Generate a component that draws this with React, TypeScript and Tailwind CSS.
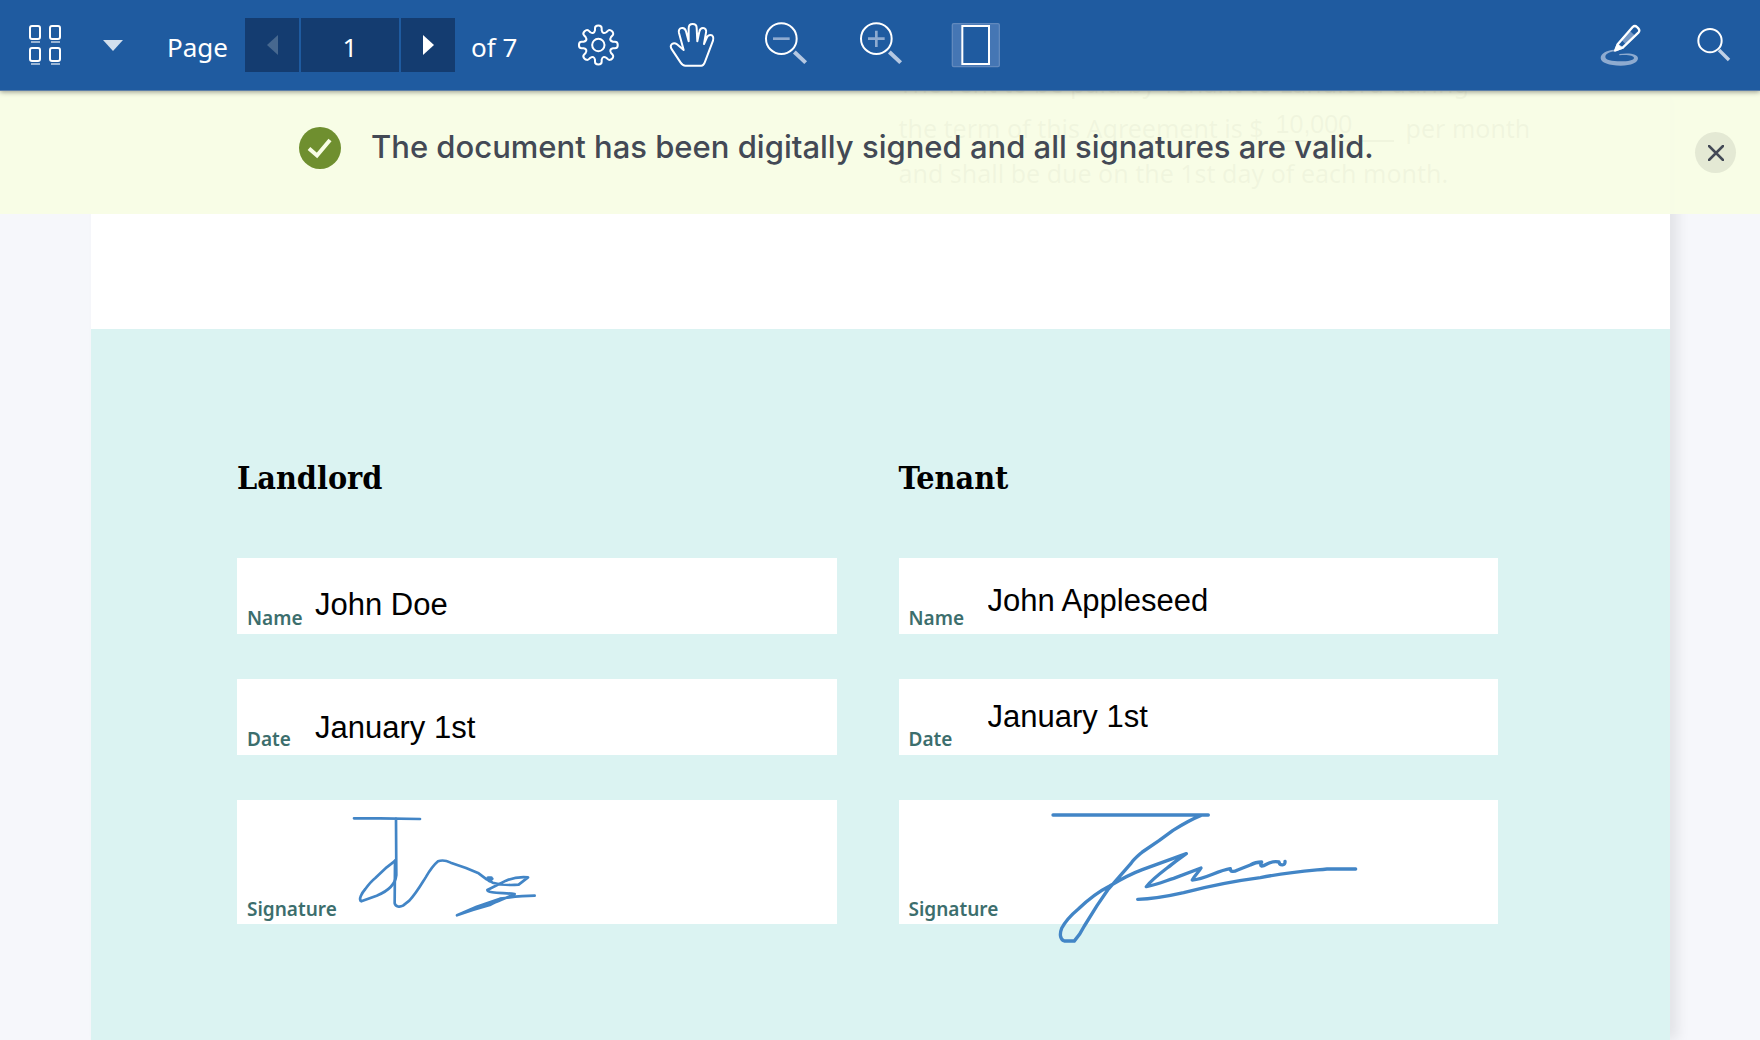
import { useState, type ReactNode } from "react";

const GEAR_PATH = (() => {
  const cx = 175;
  const cy = 135;
  const point = (tooth: number, side: number, radius: number) => {
    const angle = (tooth * Math.PI) / 4;
    const x = cx + radius * Math.sin(angle) + side * Math.cos(angle);
    const y = cy - radius * Math.cos(angle) + side * Math.sin(angle);
    return `${x.toFixed(1)} ${y.toFixed(1)}`;
  };
  const parts: string[] = [];
  for (let i = 0; i < 8; i++) {
    parts.push(`${i === 0 ? "M" : "L"}${point(i, -10, 44)}`);
    parts.push(`L${point(i, -10, 50)}`);
    parts.push(`C${point(i, -10, 61)} ${point(i, 10, 61)} ${point(i, 10, 50)}`);
    parts.push(`L${point(i, 10, 44)}`);
    parts.push(`Q${point(i + 0.5, 0, 34)} ${point(i + 1, -10, 44)}`);
  }
  return parts.join(" ") + "Z";
})();

function ToolIcon({ viewBox, children }: { viewBox: string; children: ReactNode }) {
  return (
    <svg viewBox={viewBox} className="h-12 w-[49px] overflow-visible" fill="none" stroke="#fff" strokeWidth="6" strokeLinecap="round" strokeLinejoin="round" aria-hidden="true">
      {children}
    </svg>
  );
}

function ToolButton({ label, children }: { label: string; children: ReactNode }) {
  return (
    <button type="button" aria-label={label} className="flex h-full w-[95px] items-center justify-center">
      {children}
    </button>
  );
}

function Toolbar() {
  const [page, setPage] = useState("1");
  return (
    <header className="relative z-20 flex h-[91px] shrink-0 items-center border-b border-[#5c7ea8] bg-[#1f5ba0] font-['Noto_Sans',sans-serif] text-[26px] text-white shadow-[0_1px_5px_rgba(0,0,0,0.4)]">
      <button type="button" aria-label="Thumbnails" className="ml-7">
        <svg viewBox="0 0 36 44" className="h-11 w-9" fill="none" stroke="#fff" strokeWidth="2" aria-hidden="true">
          <rect x="2" y="3" width="10" height="13" rx="2" />
          <rect x="22" y="3" width="10" height="13" rx="2" />
          <rect x="2" y="25" width="10" height="13" rx="2" />
          <rect x="22" y="25" width="10" height="13" rx="2" />
          <path d="M3 19h9M23 19h9M3 41h9M23 41h9" strokeOpacity=".55" />
        </svg>
      </button>
      <button type="button" aria-label="View options" className="ml-[39px]">
        <svg viewBox="0 0 20 11" className="h-[11px] w-5" fill="#d2dfed" aria-hidden="true">
          <path d="M0 0h20L10 11z" />
        </svg>
      </button>
      <label htmlFor="page-number" className="ml-11 w-[78px] pt-1">
        Page
      </label>
      <div className="flex h-[54px] gap-[2px]">
        <button type="button" aria-label="Previous page" disabled className="flex w-[54px] items-center justify-center bg-[#143c70]">
          <svg viewBox="0 0 11 20" className="h-5 w-[11px]" fill="#47688f" aria-hidden="true">
            <path d="M11 0v20L0 10z" />
          </svg>
        </button>
        <input id="page-number" value={page} onChange={(e) => setPage(e.target.value)} className="w-[98px] bg-[#143c70] pt-1 text-center text-white outline-none" />
        <button type="button" aria-label="Next page" className="flex w-[54px] items-center justify-center bg-[#143c70]">
          <svg viewBox="0 0 11 20" className="h-5 w-[11px]" fill="#fff" aria-hidden="true">
            <path d="M0 0v20l11-10z" />
          </svg>
        </button>
      </div>
      <span className="ml-4 w-[79px] pt-1 whitespace-nowrap">of 7</span>
      <ToolButton label="Settings">
        <ToolIcon viewBox="99 63 147 144">
          <path d={GEAR_PATH} />
          <circle cx="175" cy="135" r="18.500" />
        </ToolIcon>
      </ToolButton>
      <ToolButton label="Pan">
        <ToolIcon viewBox="384 63 147 144">
          <path d="M436 197H484C489 197 492 193 494 188L519 122C522 112 518 105 512 105C506 105 502 108 500 114L492 132L498 98C500 90 496 84 489 84C482 84 479 89 478 95L472 124L470 84C470 77 465 72 458 72C450 72 446 77 446 85V124L438 94C436 86 431 83 425 84C418 85 415 91 417 99L431 150L411 133C406 129 400 129 396 132C391 136 392 143 396 149L422 188C426 194 430 197 436 197Z" />
        </ToolIcon>
      </ToolButton>
      <ToolButton label="Zoom out">
        <ToolIcon viewBox="669 63 147 144">
          <circle cx="724" cy="116" r="46" />
          <path d="M699 116h50" stroke="#8eabd0" strokeLinecap="butt" strokeWidth="8" />
          <path d="M763 156l34 32" stroke="#b5c8e2" strokeLinecap="butt" strokeWidth="12" />
        </ToolIcon>
      </ToolButton>
      <ToolButton label="Zoom in">
        <ToolIcon viewBox="954 63 147 144">
          <circle cx="1009" cy="116" r="46" />
          <path d="M984 116h50M1009 92v49" stroke="#8eabd0" strokeLinecap="butt" strokeWidth="8" />
          <path d="M1048 156l34 32" stroke="#b5c8e2" strokeLinecap="butt" strokeWidth="12" />
        </ToolIcon>
      </ToolButton>
      <ToolButton label="Fit page">
        <ToolIcon viewBox="1239 63 147 144">
          <rect x="1237" y="71" width="141" height="129" rx="4" fill="#4576b4" stroke="#6189bd" strokeWidth="4" />
          <rect x="1267" y="78" width="80" height="114" fill="#1f5ba0" strokeLinejoin="miter" />
        </ToolIcon>
      </ToolButton>
      <div className="ml-auto flex h-full">
        <button type="button" aria-label="Annotate" className="flex w-[94px] items-center justify-center">
          <ToolIcon viewBox="105 63 147 144">
            <path
              d="M163 149C138 151 122 161 122 174C122 188 148 197 182 197C214 197 234 188 234 175C234 163 210 157 178 162L178 166C202 163 222 167 222 174C222 181 204 184 182 184C156 184 136 180 136 171C136 162 148 156 164 154Z"
              fill="#8eabd0"
              stroke="none"
            />
            <path d="M182 118L200 136L226 108L209 92Z" fill="#7296c4" stroke="none" />
            <path d="M173 133L218 81C222 77 227 77 231 81L235 85C239 89 239 94 235 98L189 142L166 151Z" strokeWidth="7" />
            <path d="M163 153l9-22 17 13z" fill="#fff" strokeWidth="2" />
          </ToolIcon>
        </button>
        <button type="button" aria-label="Search" className="flex w-[94px] items-center justify-center">
          <ToolIcon viewBox="387 63 147 144">
            <circle cx="450" cy="122" r="35" strokeWidth="6" />
            <path d="M477 150l30 30" stroke="#c0d0e6" strokeLinecap="butt" strokeWidth="10" />
          </ToolIcon>
        </button>
      </div>
    </header>
  );
}

function Banner({ onClose }: { onClose: () => void }) {
  return (
    <div role="status" className="absolute inset-x-0 top-0 z-10 flex h-[123px] items-center bg-[#f8fde5]/96 pr-6 pl-[299px] font-['Inter',sans-serif] text-[#434955]">
      <svg viewBox="0 0 42 42" className="mb-[10px] size-[42px] shrink-0" aria-hidden="true">
        <circle cx="21" cy="21" r="21" fill="#6f8f2f" />
        <path d="M10 21.500l8 7L31 13" fill="none" stroke="#f8fde5" strokeWidth="4" />
      </svg>
      <p className="mb-3 ml-[30px] text-[31px] leading-10 font-medium whitespace-nowrap">The document has been digitally signed and all signatures are valid.</p>
      <button type="button" aria-label="Close" onClick={onClose} className="ml-auto flex size-[41px] items-center justify-center rounded-full bg-[#e4e9d4]">
        <svg viewBox="0 0 16 16" className="size-4" stroke="#434955" strokeWidth="2.500" strokeLinecap="round" aria-hidden="true">
          <path d="M1 1l14 14M15 1L1 15" />
        </svg>
      </button>
    </div>
  );
}

type Entry = { id: string; label: string; value: string; inputClass: string };
type Party = { title: string; labelClass: string; entries: Entry[]; signatureBox: string; signature: ReactNode };

const PARTIES: Party[] = [
  {
    title: "Landlord",
    labelClass: "w-[68px]",
    entries: [
      { id: "landlord-name", label: "Name", value: "John Doe", inputClass: "mt-[29px]" },
      { id: "landlord-date", label: "Date", value: "January 1st", inputClass: "mt-[31px]" },
    ],
    signatureBox: "51 30 1800 372",
    signature: (
      <>
        <path d="M402 85H480L600 87M528 86L529 255C526 285 500 305 470 317L424 334C414 330 426 308 436 297C447 282 456 272 466 264L500 232L526 212" />
        <path d="M525 212L524 340C526 351 540 352 549 347L568 332C590 308 602 286 617 262C630 240 642 224 654 214C664 210 680 212 692 218L738 234L776 250L800 268L818 278C845 286 870 286 896 284L924 262C900 260 876 264 858 272L802 300C802 310 850 308 884 312C860 324 830 334 812 344L758 360L711 376L770 350L840 326C880 320 910 317 944 317" />
        <path d="M804 264l10 0M808 272l8 -6" strokeWidth="10" />
      </>
    ),
  },
  {
    title: "Tenant",
    labelClass: "w-[79px]",
    entries: [
      { id: "tenant-name", label: "Name", value: "John Appleseed", inputClass: "mt-[25px]" },
      { id: "tenant-date", label: "Date", value: "January 1st", inputClass: "mt-5" },
    ],
    signatureBox: "26 30 1800 372",
    signature: (
      <g strokeWidth="10">
        <path d="M488 75H954M932 76C905 87 880 101 848 121L806 152L756 186C740 200 730 208 722 220L680 268L652 300L620 347L582 408C573 426 564 440 552 453H522C508 448 508 430 514 415C526 392 546 372 564 357C590 332 620 307 658 288C700 263 726 250 756 239L888 191L856 214C824 240 790 262 768 290C800 284 822 274 850 265L932 234C924 248 912 257 906 270C945 268 980 242 1020 236C1020 246 1030 246 1042 240L1080 225C1092 218 1104 216 1114 216C1106 232 1116 230 1130 222C1145 214 1156 214 1166 216C1168 228 1186 228 1184 214" />
        <path d="M742 328C790 327 836 318 880 308C980 282 1040 272 1110 263C1200 245 1260 242 1310 237H1396" />
      </g>
    ),
  },
];

function PartyForm({ party }: { party: Party }) {
  const [values, setValues] = useState(party.entries.map((entry) => entry.value));
  return (
    <section>
      <h2 className="mb-[58px] font-['DejaVu_Serif_Condensed','DejaVu_Serif',serif] text-[32px] leading-[44px] font-bold text-black">{party.title}</h2>
      <div className="flex flex-col gap-[45px]">
        {party.entries.map((entry, i) => (
          <div key={entry.id} className="flex h-[76px] items-start bg-white pl-[10px]">
            <label htmlFor={entry.id} className={`${party.labelClass} shrink-0 self-end pb-[3px] text-[19px] leading-[26px] font-semibold text-[#3c6e6d]`}>
              {entry.label}
            </label>
            <input
              id={entry.id}
              value={values[i]}
              onChange={(e) => setValues(values.map((v, k) => (k === i ? e.target.value : v)))}
              className={`${entry.inputClass} h-9 min-w-0 flex-1 bg-transparent font-['Liberation_Sans',sans-serif] text-[31px] leading-9 text-black outline-none`}
            />
          </div>
        ))}
        <div className="relative flex h-[124px] items-end bg-white pl-[10px]">
          <span className="pb-[2px] text-[19px] leading-[26px] font-semibold text-[#3c6e6d]">Signature</span>
          <svg viewBox={party.signatureBox} role="img" aria-label={`${party.title} signature`} className="absolute top-0 left-0 h-[124px] w-[600px] overflow-visible" fill="none" stroke="#4285c6" strokeWidth="8" strokeLinecap="round" strokeLinejoin="round">
            {party.signature}
          </svg>
        </div>
      </div>
    </section>
  );
}

export default function App() {
  const [showBanner, setShowBanner] = useState(true);
  return (
    <div className="flex h-screen flex-col overflow-hidden bg-[#f6f7fb]">
      <Toolbar />
      <main className="relative flex min-h-0 flex-1 flex-col overflow-hidden">
        {showBanner && <Banner onClose={() => setShowBanner(false)} />}
        <article className="mr-[90px] ml-[91px] flex flex-1 flex-col bg-white font-['Noto_Sans',sans-serif] shadow-[8px_0_12px_rgba(0,0,0,0.08)]">
          <div className="grid h-[238px] shrink-0 grid-cols-2 gap-x-[62px] pr-[172px] pl-[146px]">
            <div className="col-start-2 -mt-[30px] text-[25px] leading-[45px] whitespace-nowrap text-[#444]">
              <p>The rent to be paid by Tenant to Landlord during</p>
              <p className="flex">
                the term of this Agreement is $
                <span className="mr-3 h-9 w-[130px] shrink-0 border-b-2 border-[#444] pl-3 font-['Liberation_Sans',sans-serif] leading-9">10,000</span>
                per month
              </p>
              <p>and shall be due on the 1st day of each month.</p>
            </div>
          </div>
          <div className="grid flex-1 grid-cols-2 content-start gap-x-[62px] bg-[#dbf3f2] pt-[127px] pr-[172px] pl-[146px]">
            {PARTIES.map((party) => (
              <PartyForm key={party.title} party={party} />
            ))}
          </div>
        </article>
      </main>
    </div>
  );
}
